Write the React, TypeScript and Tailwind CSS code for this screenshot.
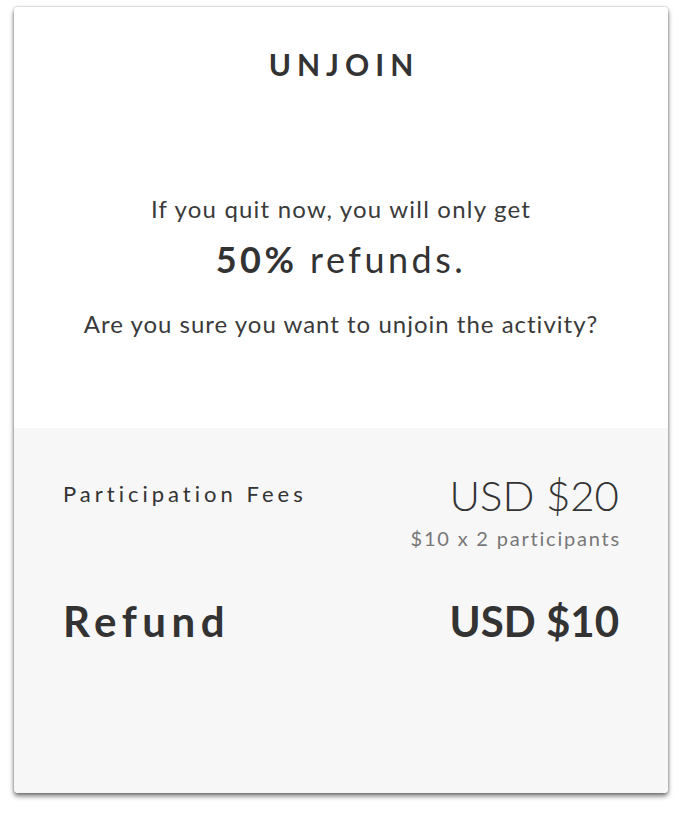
import React from "react";

export default function App() {
  const font = { fontFamily: "Lato, 'Open Sans', sans-serif" };
  return (
    <div className="w-[682px] h-[814px] bg-white" style={font}>
      <div className="pt-[7px] pl-[14px]">
        <div className="w-[654px] h-[786px] rounded-[4px] overflow-hidden flex flex-col shadow-[0_3px_5px_rgba(0,0,0,0.55),0_0_2px_rgba(0,0,0,0.35)]">
          <div className="h-[421px] bg-white flex flex-col items-center text-[#333]">
            <div className="mt-[41px] text-[30px] leading-[32px] font-bold tracking-[6px] pl-[6px]">UNJOIN</div>
            <div className="mt-[115px] text-[24px] leading-[28px] tracking-[1.2px] text-[#3a3a3a]">If you quit now, you will only get</div>
            <div className="mt-[14px] text-[36px] leading-[44px] tracking-[3.5px]">
              <span className="font-bold">50%</span> refunds.
            </div>
            <div className="mt-[29px] text-[24px] leading-[28px] tracking-[1px] text-[#3a3a3a]">Are you sure you want to unjoin the activity?</div>
          </div>
          <div className="flex-1 bg-[#f7f7f7] px-[49px] text-[#333]">
            <div className="flex justify-between items-start pt-[45px]">
              <div className="mt-[7px] text-[22px] leading-[28px] tracking-[4px]">Participation Fees</div>
              <div className="flex flex-col items-end">
                <div className="text-[42px] leading-[44px] font-light">USD $20</div>
                <div className="mt-[9px] text-[20px] leading-[24px] tracking-[1.8px] text-[#777] mr-[-2px]">$10 x 2 participants</div>
              </div>
            </div>
            <div className="flex justify-between items-center mt-[47px]">
              <div className="text-[42px] leading-[48px] font-bold tracking-[5.5px]">Refund</div>
              <div className="text-[42px] leading-[48px] font-bold">USD $10</div>
            </div>
          </div>
        </div>
      </div>
    </div>
  );
}
